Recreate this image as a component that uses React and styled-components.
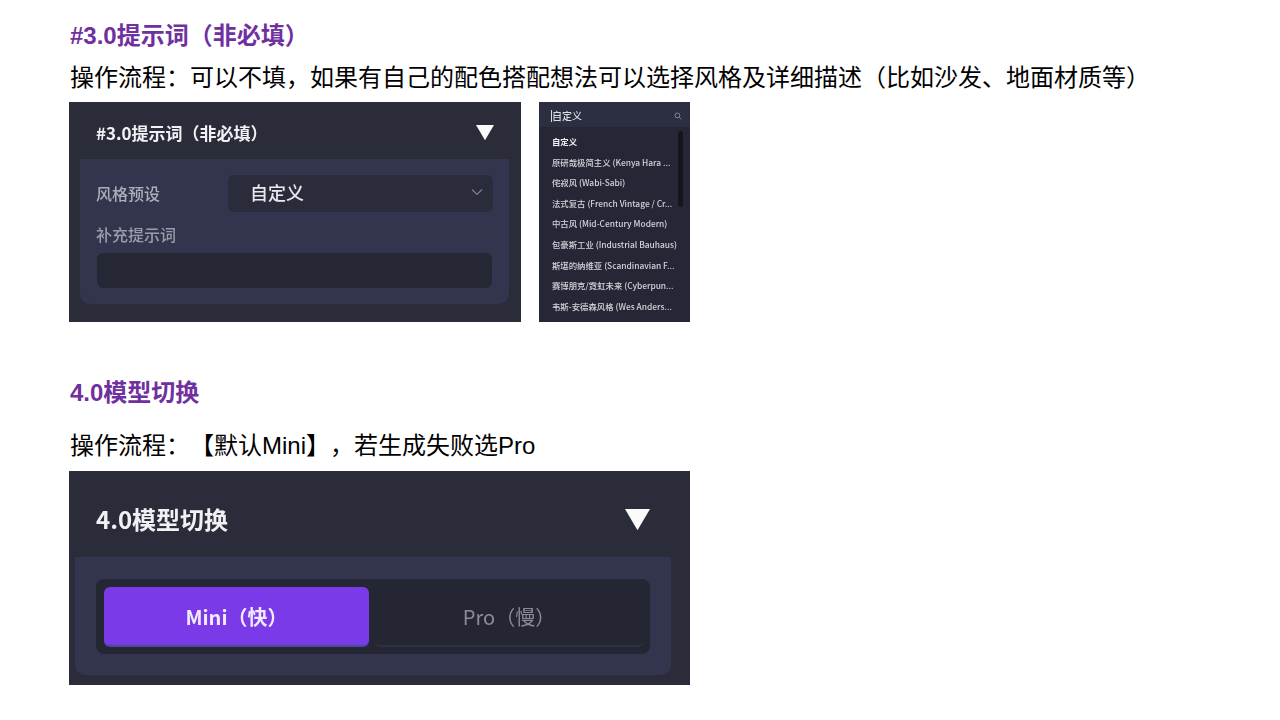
import React from "react";
import styled, { createGlobalStyle } from "styled-components";

const FONT = `"Liberation Sans", "Noto Sans CJK SC", sans-serif`;
const UI_FONT = `"Noto Sans CJK SC", "Noto Sans", sans-serif`;

const Global = createGlobalStyle`
  html, body { margin: 0; padding: 0; background: #fff; }
  body { font-family: ${FONT}; overflow: hidden; text-spacing-trim: space-all; text-autospace: no-autospace; }
`;

const Page = styled.main`
  width: 1280px;
  height: 720px;
  box-sizing: border-box;
  padding: 18px 0 0 69px;
  display: flex;
  flex-direction: column;
`;
const Heading = styled.h2`
  margin: ${(p) => p.$top || 0}px 0 0 1px;
  font-size: 24px;
  line-height: 36px;
  font-weight: 700;
  color: #7030a0;
  white-space: nowrap;
`;
const Para = styled.p`
  margin: ${(p) => p.$top || 0}px 0 ${(p) => p.$bottom || 0}px 1px;
  font-size: 24px;
  line-height: 36px;
  color: #000;
  white-space: nowrap;
`;
const ShotRow = styled.div`
  display: flex;
  gap: 18px;
`;
const Shot = styled.section`
  width: ${(p) => p.$w}px;
  height: ${(p) => p.$h}px;
  background: #2b2c3a;
  box-sizing: border-box;
  flex: none;
  overflow: hidden;
  display: flex;
  flex-direction: column;
  font-family: ${UI_FONT};
  filter: blur(0.35px);
`;
const ShotHead = styled.header`
  height: ${(p) => p.$h}px;
  flex: none;
  box-sizing: border-box;
  padding: ${(p) => p.$pt || 0}px ${(p) => p.$pr}px 0 ${(p) => p.$pl}px;
  display: flex;
  align-items: center;
  justify-content: space-between;
  color: #f1f1f4;
  font-weight: 700;
  font-size: ${(p) => p.$fs}px;
`;
const Arrow = styled.svg`
  display: block;
  flex: none;
  margin-top: ${(p) => p.$mt || 0}px;
`;
const Body1 = styled.div`
  margin: 0 12px 0 11px;
  height: 145px;
  background: #33354f;
  border-radius: 0 0 10px 10px;
  box-sizing: border-box;
  padding: 16px 16px 0 16px;
`;
const FieldRow = styled.div`
  display: flex;
  align-items: center;
  height: 37px;
`;
const FieldLabel = styled.div`
  width: 132px;
  flex: none;
  font-size: 16px;
  font-weight: 500;
  line-height: 37px;
  color: #aeaebb;
`;
const Select = styled.div`
  flex: 1;
  height: 37px;
  box-sizing: border-box;
  background: #2a2b3b;
  border-radius: 6px;
  display: flex;
  align-items: center;
  justify-content: space-between;
  padding: 0 10px 3px 22px;
  font-size: 18px;
  font-weight: 500;
  color: #e8e8ee;
`;
const SubLabel = styled.div`
  margin-top: 10px;
  height: 24px;
  line-height: 24px;
  font-size: 16px;
  font-weight: 500;
  color: #9c9cab;
`;
const TextBox = styled.div`
  margin: 7px 1px 0;
  height: 35px;
  background: #262735;
  border-radius: 6px;
`;
const Search = styled.div`
  height: 25px;
  flex: none;
  background: #2c2e42;
  display: flex;
  align-items: center;
  justify-content: space-between;
  padding: 2px 8px 0 12px;
  font-size: 10px;
  font-weight: 500;
  color: #dcdce4;
  box-sizing: border-box;
`;
const Typed = styled.span`
  border-left: 1px solid #dcdce4;
  line-height: 12px;
`;
const DropList = styled.ul`
  list-style: none;
  margin: 0;
  padding: 4px 0 0 13px;
  position: relative;
  flex: 1;
  background: #262736;
`;
const DropItem = styled.li`
  height: 20.6px;
  line-height: 20.6px;
  font-size: 8.4px;
  font-weight: ${(p) => (p.$active ? 700 : 500)};
  color: ${(p) => (p.$active ? "#f2f2f6" : "#d4d4dc")};
  white-space: nowrap;
`;
const Scroll = styled.div`
  position: absolute;
  right: 7px;
  top: 4px;
  width: 5px;
  height: 76px;
  border-radius: 3px;
  background: #15151d;
`;
const Body2 = styled.div`
  margin: 0 19px 0 6px;
  height: 118px;
  background: #33354f;
  border-radius: 0 0 10px 10px;
  box-sizing: border-box;
  padding: 22px 21px 0 21px;
`;
const Toggle = styled.div`
  height: 75px;
  background: #252634;
  border-radius: 8px;
  box-sizing: border-box;
  padding: 8px 6px 7px 8px;
  display: flex;
  gap: 5px;
`;
const ToggleBtn = styled.div`
  flex: ${(p) => (p.$on ? "0 0 265px" : "1")};
  height: 60px;
  border-radius: 6px;
  display: flex;
  align-items: center;
  justify-content: center;
  font-size: 20px;
  font-weight: ${(p) => (p.$on ? 700 : 400)};
  background: ${(p) => (p.$on ? "#7a3ae8" : "transparent")};
  color: ${(p) => (p.$on ? "#f0e9ff" : "#8b8b95")};
  border-bottom: 2px solid ${(p) => (p.$on ? "#4b4a9a" : "#2e2f3f")};
  box-sizing: border-box;
`;

const Tri = ({ s, mt }) => (
  <Arrow $mt={mt} width={s} height={s * 0.85} viewBox="0 0 20 17">
    <path d="M0 0H20L10 17Z" fill="#fafafa" />
  </Arrow>
);

const items = [
  "原研哉极简主义 (Kenya Hara ...",
  "侘寂风 (Wabi-Sabi)",
  "法式复古 (French Vintage / Cr...",
  "中古风 (Mid-Century Modern)",
  "包豪斯工业 (Industrial Bauhaus)",
  "斯堪的纳维亚 (Scandinavian F...",
  "赛博朋克/霓虹未来 (Cyberpun...",
  "韦斯-安德森风格 (Wes Anders...",
];

export default function App() {
  return (
    <Page>
      <Global />
      <Heading>#3.0提示词（非必填）</Heading>
      <Para $top={6} $bottom={6}>操作流程：可以不填，如果有自己的配色搭配想法可以选择风格及详细描述（比如沙发、地面材质等）</Para>
      <ShotRow>
        <Shot $w={452} $h={220}>
          <ShotHead $h={57} $pt={4} $pl={27} $pr={27} $fs={17}>
            #3.0提示词（非必填）
            <Tri s={18} mt={1} />
          </ShotHead>
          <Body1>
            <FieldRow>
              <FieldLabel>风格预设</FieldLabel>
              <Select>
                自定义
                <Arrow width="12" height="8" viewBox="0 0 12 8" fill="none">
                  <path d="M1 1.5L6 6.5L11 1.5" stroke="#7d7f94" strokeWidth="1.2" />
                </Arrow>
              </Select>
            </FieldRow>
            <SubLabel>补充提示词</SubLabel>
            <TextBox />
          </Body1>
        </Shot>
        <Shot $w={151} $h={220}>
          <Search>
            <Typed>自定义</Typed>
            <Arrow width="8" height="8" viewBox="0 0 8 8" fill="none">
              <circle cx="3.4" cy="3.4" r="2.4" stroke="#8a8c9e" strokeWidth="0.9" />
              <path d="M5.2 5.2L7.4 7.4" stroke="#8a8c9e" strokeWidth="0.9" />
            </Arrow>
          </Search>
          <DropList>
            <DropItem $active>自定义</DropItem>
            {items.map((t) => (
              <DropItem key={t}>{t}</DropItem>
            ))}
            <Scroll />
          </DropList>
        </Shot>
      </ShotRow>
      <Heading $top={53}>4.0模型切换</Heading>
      <Para $top={17} $bottom={7}>操作流程：【默认Mini】，若生成失败选Pro</Para>
      <Shot $w={621} $h={214}>
        <ShotHead $h={86} $pt={8} $pl={27} $pr={40} $fs={24}>
          4.0模型切换
          <Tri s={25} mt={3} />
        </ShotHead>
        <Body2>
          <Toggle>
            <ToggleBtn $on>Mini（快）</ToggleBtn>
            <ToggleBtn>Pro（慢）</ToggleBtn>
          </Toggle>
        </Body2>
      </Shot>
    </Page>
  );
}
